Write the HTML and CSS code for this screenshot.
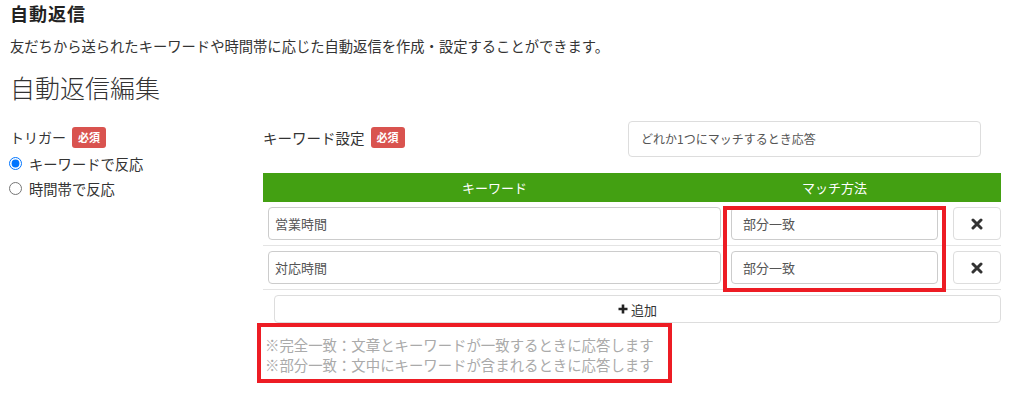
FILE: index.html
```html
<!DOCTYPE html>
<html lang="ja">
<head>
    <meta charset="UTF-8">
    <title>自動返信</title>
    <link rel="stylesheet" href="styles.css">
</head>
<body>
    <div class="page">
        <h2 class="title">自動返信</h2>
        <p class="lead">友だちから送られたキーワードや時間帯に応じた自動返信を作成・設定することができます。</p>
        <h1 class="edit-title">自動返信編集</h1>

        <div class="form">
            <div class="side">
                <div class="label-row">トリガー<span class="badge">必須</span></div>
                <label class="radio"><input type="radio" name="trigger" checked>キーワードで反応</label>
                <label class="radio"><input type="radio" name="trigger">時間帯で反応</label>
            </div>

            <div class="main">
                <div class="top-row">
                    <div class="label-row kw-label">キーワード設定<span class="badge">必須</span></div>
                    <div class="select">どれか1つにマッチするとき応答</div>
                </div>

                <div class="table-wrap">
                    <table class="kw-table">
                        <thead>
                            <tr>
                                <th class="col-kw">キーワード</th>
                                <th class="col-match">マッチ方法</th>
                                <th class="col-del"></th>
                            </tr>
                        </thead>
                        <tbody>
                            <tr>
                                <td class="col-kw"><input class="field" type="text" value="営業時間"></td>
                                <td class="col-match"><input class="field" type="text" value="部分一致"></td>
                                <td class="col-del">
                                    <button class="del-btn">
                                        <svg width="12" height="12" viewBox="0 0 12 12"><path d="M2 2L10 10M10 2L2 10" stroke="#333" stroke-width="3" stroke-linecap="round"/></svg>
                                    </button>
                                </td>
                            </tr>
                            <tr>
                                <td class="col-kw"><input class="field" type="text" value="対応時間"></td>
                                <td class="col-match"><input class="field" type="text" value="部分一致"></td>
                                <td class="col-del">
                                    <button class="del-btn">
                                        <svg width="12" height="12" viewBox="0 0 12 12"><path d="M2 2L10 10M10 2L2 10" stroke="#333" stroke-width="3" stroke-linecap="round"/></svg>
                                    </button>
                                </td>
                            </tr>
                        </tbody>
                    </table>
                    <!-- 注釈の赤枠 -->
                    <div class="mark"></div>
                </div>

                <button class="add-btn">
                    <svg width="10" height="10" viewBox="0 0 10 10"><path d="M5 0.5V9.5M0.5 5H9.5" stroke="#222" stroke-width="2.6"/></svg>
                    追加
                </button>

                <div class="notes">
                    <p>※完全一致：文章とキーワードが一致するときに応答します</p>
                    <p>※部分一致：文中にキーワードが含まれるときに応答します</p>
                </div>
            </div>
        </div>
    </div>
</body>
</html>
```

FILE: styles.css
```css
*{
    margin: 0;
    padding: 0;
    box-sizing: border-box;
}
body{
    font-family: "Noto Sans CJK JP", "Noto Sans", sans-serif;
    color: #333;
    background: #fff;
}
.page{
    padding: 0 10px;
}
.title{
    font-size: 18px;
    font-weight: bold;
    line-height: 27px;
    letter-spacing: 1px;
    color: #222;
}
.lead{
    margin-top: 9px;
    font-size: 14.3px;
    line-height: 20px;
}
.edit-title{
    margin-top: 13px;
    font-size: 25px;
    font-weight: 300;
    line-height: 36px;
    color: #333;
}
.form{
    display: flex;
    margin-top: 16px;
}
.side{
    width: 245px;
    padding-top: 6px;
}
.label-row{
    display: flex;
    align-items: center;
    font-size: 14px;
    line-height: 21px;
}
.badge{
    display: inline-block;
    margin-left: 6px;
    width: 34px;
    height: 21px;
    line-height: 21px;
    text-align: center;
    font-size: 11px;
    font-weight: bold;
    color: #fff;
    background-color: #d9534f;
    border-radius: 3px;
}
.radio{
    display: flex;
    align-items: center;
    font-size: 14.3px;
    line-height: 25px;
}
.side .label-row{
    margin-bottom: 3px;
}
.radio input{
    width: 13px;
    height: 13px;
    margin: 0 7px 0 -1px;
}
.main{
    width: 746px;
    padding-left: 8px;
}
.top-row{
    display: flex;
    align-items: center;
    height: 36px;
}
.kw-label{
    width: 365px;
    font-size: 14.5px;
    margin-top: -3px;
}
.select{
    width: 353px;
    height: 36px;
    line-height: 34px;
    padding-left: 12px;
    font-size: 12px;
    color: #555;
    border: 1px solid #ddd;
    border-radius: 4px;
}
.table-wrap{
    position: relative;
    margin-top: 16px;
    width: 738px;
}
.kw-table{
    width: 738px;
    border-collapse: collapse;
    table-layout: fixed;
}
.kw-table th{
    height: 29px;
    background-color: #43a012;
    color: #fff;
    font-size: 13px;
    font-weight: normal;
    text-align: center;
}
.kw-table td{
    padding: 5px;
    border-bottom: 1px solid #e4e4e4;
}
.col-kw{
    width: 463px;
}
.col-match{
    width: 217px;
}
.col-del{
    width: 58px;
}
.kw-table td.col-del{
    padding: 5px 0 5px 10px;
}
.field{
    display: block;
    width: 100%;
    height: 33px;
    padding: 0 6px;
    font-family: "Noto Sans CJK JP", sans-serif;
    font-size: 13px;
    color: #555;
    border: 1px solid #ccc;
    border-radius: 4px;
    background: #fff;
}
.kw-table td.col-match .field{
    padding-left: 11px;
}
.del-btn{
    display: flex;
    align-items: center;
    justify-content: center;
    width: 48px;
    height: 33px;
    background: #fff;
    border: 1px solid #ddd;
    border-radius: 4px;
}
.mark{
    position: absolute;
    left: 460px;
    top: 33px;
    width: 223px;
    height: 86px;
    border: 4px solid #ed1c24;
}
.add-btn{
    display: flex;
    align-items: center;
    justify-content: center;
    gap: 3px;
    margin: 5px 0 0 11px;
    width: 727px;
    height: 28px;
    font-family: "Noto Sans CJK JP", sans-serif;
    font-size: 13px;
    color: #333;
    background: #fff;
    border: 1px solid #ddd;
    border-radius: 4px;
}
.notes{
    margin-left: -6px;
    width: 415px;
    padding: 8px 4px 5px 4px;
    border: 4px solid #ed1c24;
}
.notes p{
    font-size: 14.4px;
    line-height: 19.5px;
    color: #aaa;
    white-space: nowrap;
}
```
